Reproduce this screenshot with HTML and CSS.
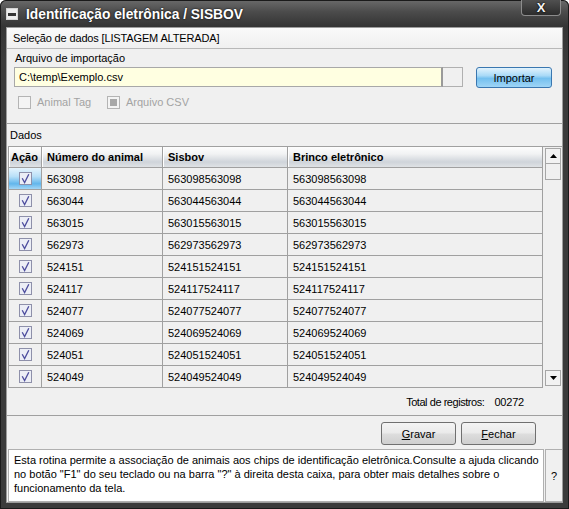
FILE: index.html
```html
<!DOCTYPE html>
<html lang="pt">
<head>
<meta charset="utf-8">
<title>Identificação eletrônica / SISBOV</title>
<link rel="stylesheet" href="styles.css">
</head>
<body>
<div class="window">
  <div class="titlebar">
    <span class="sysicon"><span class="bar"></span></span>
    <span class="title">Identificação eletrônica / SISBOV</span>
    <span class="close">X</span>
  </div>
  <div class="main">
    <section class="sel">
      <div class="sel-head">Seleção de dados [LISTAGEM ALTERADA]</div>
      <div class="sel-body">
        <div class="lbl">Arquivo de importação</div>
        <div class="file-row">
          <div class="file-input">C:\temp\Exemplo.csv</div>
          <div class="file-btn"></div>
          <button class="btn-import">Importar</button>
        </div>
        <div class="checks">
          <div class="chk-item first"><span class="chk"></span><span class="chk-lbl">Animal Tag</span></div>
          <div class="chk-item"><span class="chk on"><span class="dot"></span></span><span class="chk-lbl">Arquivo CSV</span></div>
        </div>
      </div>
    </section>
    <div class="dados-title">Dados</div>
    <div class="grid-wrap">
      <div class="grid">
        <div class="hc c1">Ação</div><div class="hc">Número do animal</div><div class="hc">Sisbov</div><div class="hc">Brinco eletrônico</div>

        <div class="cell c1 sel-cell"><svg class="cb" width="13" height="13" viewBox="0 0 13 13"><rect x="0.5" y="0.5" width="12" height="12" fill="#eceef6" stroke="#8e90aa"/><path d="M3.2 6.2 L5.6 10.6 L9.8 2.2" fill="none" stroke="#4d4d9e" stroke-width="1.3"/></svg></div><div class="cell">563098</div><div class="cell">563098563098</div><div class="cell">563098563098</div>

        <div class="cell c1"><svg class="cb" width="13" height="13" viewBox="0 0 13 13"><rect x="0.5" y="0.5" width="12" height="12" fill="#eceef6" stroke="#8e90aa"/><path d="M3.2 6.2 L5.6 10.6 L9.8 2.2" fill="none" stroke="#4d4d9e" stroke-width="1.3"/></svg></div><div class="cell">563044</div><div class="cell">563044563044</div><div class="cell">563044563044</div>

        <div class="cell c1"><svg class="cb" width="13" height="13" viewBox="0 0 13 13"><rect x="0.5" y="0.5" width="12" height="12" fill="#eceef6" stroke="#8e90aa"/><path d="M3.2 6.2 L5.6 10.6 L9.8 2.2" fill="none" stroke="#4d4d9e" stroke-width="1.3"/></svg></div><div class="cell">563015</div><div class="cell">563015563015</div><div class="cell">563015563015</div>

        <div class="cell c1"><svg class="cb" width="13" height="13" viewBox="0 0 13 13"><rect x="0.5" y="0.5" width="12" height="12" fill="#eceef6" stroke="#8e90aa"/><path d="M3.2 6.2 L5.6 10.6 L9.8 2.2" fill="none" stroke="#4d4d9e" stroke-width="1.3"/></svg></div><div class="cell">562973</div><div class="cell">562973562973</div><div class="cell">562973562973</div>

        <div class="cell c1"><svg class="cb" width="13" height="13" viewBox="0 0 13 13"><rect x="0.5" y="0.5" width="12" height="12" fill="#eceef6" stroke="#8e90aa"/><path d="M3.2 6.2 L5.6 10.6 L9.8 2.2" fill="none" stroke="#4d4d9e" stroke-width="1.3"/></svg></div><div class="cell">524151</div><div class="cell">524151524151</div><div class="cell">524151524151</div>

        <div class="cell c1"><svg class="cb" width="13" height="13" viewBox="0 0 13 13"><rect x="0.5" y="0.5" width="12" height="12" fill="#eceef6" stroke="#8e90aa"/><path d="M3.2 6.2 L5.6 10.6 L9.8 2.2" fill="none" stroke="#4d4d9e" stroke-width="1.3"/></svg></div><div class="cell">524117</div><div class="cell">524117524117</div><div class="cell">524117524117</div>

        <div class="cell c1"><svg class="cb" width="13" height="13" viewBox="0 0 13 13"><rect x="0.5" y="0.5" width="12" height="12" fill="#eceef6" stroke="#8e90aa"/><path d="M3.2 6.2 L5.6 10.6 L9.8 2.2" fill="none" stroke="#4d4d9e" stroke-width="1.3"/></svg></div><div class="cell">524077</div><div class="cell">524077524077</div><div class="cell">524077524077</div>

        <div class="cell c1"><svg class="cb" width="13" height="13" viewBox="0 0 13 13"><rect x="0.5" y="0.5" width="12" height="12" fill="#eceef6" stroke="#8e90aa"/><path d="M3.2 6.2 L5.6 10.6 L9.8 2.2" fill="none" stroke="#4d4d9e" stroke-width="1.3"/></svg></div><div class="cell">524069</div><div class="cell">524069524069</div><div class="cell">524069524069</div>

        <div class="cell c1"><svg class="cb" width="13" height="13" viewBox="0 0 13 13"><rect x="0.5" y="0.5" width="12" height="12" fill="#eceef6" stroke="#8e90aa"/><path d="M3.2 6.2 L5.6 10.6 L9.8 2.2" fill="none" stroke="#4d4d9e" stroke-width="1.3"/></svg></div><div class="cell">524051</div><div class="cell">524051524051</div><div class="cell">524051524051</div>

        <div class="cell c1"><svg class="cb" width="13" height="13" viewBox="0 0 13 13"><rect x="0.5" y="0.5" width="12" height="12" fill="#eceef6" stroke="#8e90aa"/><path d="M3.2 6.2 L5.6 10.6 L9.8 2.2" fill="none" stroke="#4d4d9e" stroke-width="1.3"/></svg></div><div class="cell">524049</div><div class="cell">524049524049</div><div class="cell">524049524049</div>
      </div>
      <div class="vscroll">
        <div class="sbtn"><svg width="7" height="4" viewBox="0 0 7 4"><path d="M0 4 L3.5 0 L7 4 Z" fill="#000"/></svg></div>
        <div class="thumb"></div>
        <div class="track"></div>
        <div class="sbtn"><svg width="7" height="4" viewBox="0 0 7 4"><path d="M0 0 L7 0 L3.5 4 Z" fill="#000"/></svg></div>
      </div>
    </div>
    <div class="total"><span>Total de registros:</span><span class="count">00272</span></div>
    <div class="actions">
      <button class="btn"><u>G</u>ravar</button>
      <button class="btn"><u>F</u>echar</button>
    </div>
    <div class="help">
      <div class="help-text">Esta rotina permite a associação de animais aos chips de identificação eletrônica.Consulte a ajuda clicando no botão "F1" do seu teclado ou na barra "?" à direita desta caixa, para obter mais detalhes sobre o funcionamento da tela.</div>
      <div class="help-q">?</div>
    </div>
  </div>
</div>
</body>
</html>
```
FILE: styles.css
```css
html, body {
  margin: 0;
  padding: 0;
  background: #ffffff;
}
body {
  font-family: "Liberation Sans", Arial, sans-serif;
  font-size: 11px;
  color: #000;
}
.window {
  width: 569px;
  height: 509px;
  box-sizing: border-box;
  display: flex;
  flex-direction: column;
  border-radius: 6px 6px 0 0;
  background: linear-gradient(to bottom, #6a6a6a 0px, #4b4b4b 12px, #353535 26px, #3b3b3b 60px, #3b3b3b 100%);
  box-shadow: inset 0 0 0 1px #1a1a1a;
}
.titlebar {
  height: 27px;
  display: flex;
  align-items: center;
  padding-left: 6px;
  flex: none;
}
.sysicon {
  width: 12px;
  height: 12px;
  box-sizing: border-box;
  border: 1px solid #d4d4d4;
  background: #ececec;
  display: flex;
  align-items: center;
  justify-content: center;
  margin-top: 1px;
}
.sysicon .bar {
  width: 8px;
  height: 3px;
  background: #333;
}
.title {
  margin-left: 8px;
  color: #ffffff;
  font-weight: bold;
  font-size: 13.8px;
  text-shadow: 0 0 2px #000;
  margin-top: 1px;
}
.close {
  margin-left: auto;
  margin-right: 8px;
  align-self: flex-start;
  width: 40px;
  height: 16px;
  box-sizing: border-box;
  border: 1px solid #8c8c8c;
  border-top: none;
  border-radius: 0 0 4px 4px;
  background: linear-gradient(to bottom, #505050, #2c2c2c);
  color: #f4f4f4;
  font-weight: bold;
  font-size: 13px;
  line-height: 15px;
  text-align: center;
  text-shadow: 0 0 1px #000, 0 0 2px #000;
}
.main {
  flex: 1;
  margin: 0 6px 6px 6px;
  border: 1px solid #9c9c9c;
  background: #f0f0f0;
  display: flex;
  flex-direction: column;
  min-height: 0;
}
.sel-head {
  height: 20px;
  line-height: 20px;
  padding-left: 6px;
  border-bottom: 1px solid #b8b8b8;
  background: linear-gradient(to bottom, #fafafa, #f0f0f0);
  letter-spacing: -0.15px;
}
.sel-body {
  height: 74px;
  border-bottom: 1px solid #a0a0a0;
  box-sizing: content-box;
}
.lbl {
  padding-top: 2px;
  line-height: 14px;
  padding-left: 8px;
}
.file-row {
  margin-top: 2px;
  height: 21px;
  display: flex;
  padding-left: 7px;
}
.file-input {
  width: 429px;
  height: 20px;
  box-sizing: border-box;
  border: 1px solid #a8a8a8;
  border-right: 2px solid #9a9a9a;
  background: #ffffe1;
  line-height: 18px;
  padding-left: 4px;
}
.file-btn {
  width: 20px;
  height: 20px;
  box-sizing: border-box;
  border: 1px solid #b0b0b0;
  border-left: none;
  background: #f0f0f0;
}
.btn-import {
  margin-left: 13px;
  width: 76px;
  height: 21px;
  box-sizing: border-box;
  border: 1px solid #3a77b0;
  border-radius: 3px;
  background: linear-gradient(to bottom, #e2f3fd 0%, #a9daf7 40%, #74c0ef 55%, #9fd5f6 100%);
  font-family: "Liberation Sans", Arial, sans-serif;
  font-size: 11px;
  color: #000;
  padding: 0;
}
.checks {
  margin-top: 6px;
  height: 16px;
  display: flex;
  align-items: center;
  padding-left: 11px;
}
.chk-item {
  display: flex;
  align-items: center;
}
.chk-item.first {
  width: 89px;
}
.chk {
  width: 13px;
  height: 13px;
  box-sizing: border-box;
  border: 1px solid #b4b4b4;
  background: #f4f4f4;
  display: flex;
  align-items: center;
  justify-content: center;
}
.chk .dot {
  width: 7px;
  height: 7px;
  background: #a8a8a8;
}
.chk-lbl {
  margin-left: 6px;
  color: #a3a3a3;
}
.dados-title {
  height: 22px;
  line-height: 22px;
  padding-left: 3px;
}
.grid-wrap {
  display: flex;
  height: 242px;
  flex: none;
}
.grid {
  margin-left: 1px;
  border-top: 1px solid #a0a0a0;
  border-left: 1px solid #a0a0a0;
  display: grid;
  grid-template-columns: 33px 121px 125px 255px;
  grid-auto-rows: 22px;
  grid-template-rows: 21px;
  align-content: start;
}
.hc, .cell {
  box-sizing: border-box;
  border-right: 1px solid #a0a0a0;
  border-bottom: 1px solid #a0a0a0;
  padding-left: 5px;
  display: flex;
  align-items: center;
  white-space: nowrap;
}
.hc {
  font-weight: bold;
  background: linear-gradient(to bottom, #fdfdfd 0%, #f1f2f3 35%, #cfd4da 75%, #dfe2e5 100%);
  box-shadow: inset 1px 0 0 #ffffff;
}
.hc.c1 {
  padding-left: 2px;
}
.cell.c1 {
  padding-left: 0;
  justify-content: center;
}
.sel-cell {
  background: linear-gradient(to bottom, #e6f4fd 0%, #b9e0f8 40%, #62b6ec 75%, #a4d6f6 100%);
}
.cb {
  display: block;
}
.vscroll {
  width: 19px;
  box-sizing: border-box;
  padding: 1px 1px 2px 2px;
  border-top: 1px solid #a0a0a0;
  display: flex;
  flex-direction: column;
}
.sbtn {
  width: 16px;
  height: 16px;
  box-sizing: border-box;
  border: 1px solid #a6a6a6;
  background: #f2f2f2;
  display: flex;
  align-items: center;
  justify-content: center;
}
.thumb {
  width: 16px;
  height: 16px;
  box-sizing: border-box;
  border: 1px solid #a6a6a6;
  border-top: none;
  background: #f0f0f0;
}
.track {
  flex: 1;
}
.total {
  height: 27px;
  border-bottom: 1px solid #a0a0a0;
  display: flex;
  align-items: center;
  justify-content: flex-end;
  padding-right: 38px;
  letter-spacing: -0.45px;
}
.total .count {
  margin-left: 10px;
  letter-spacing: -0.2px;
}
.actions {
  height: 32px;
  box-sizing: border-box;
  padding-top: 6px;
  padding-right: 26px;
  display: flex;
  justify-content: flex-end;
  gap: 5px;
}
.btn {
  width: 75px;
  height: 23px;
  box-sizing: border-box;
  border: 1px solid #707070;
  border-radius: 3px;
  background: linear-gradient(to bottom, #f4f4f4 0%, #ebebeb 45%, #dcdcdc 55%, #cfcfcf 100%);
  font-family: "Liberation Sans", Arial, sans-serif;
  font-size: 11px;
  color: #000;
  padding: 0;
}
.help {
  flex: 1;
  display: flex;
  padding: 1px 0 0 1px;
}
.help-text {
  width: 536px;
  box-sizing: border-box;
  background: #ffffff;
  border: 1px solid #b0b0b0;
  padding: 3px 4px 0 5px;
  line-height: 14px;
}
.help-q {
  flex: 1;
  margin-left: 1px;
  border: 1px solid #b0b0b0;
  border-right: none;
  display: flex;
  align-items: center;
  justify-content: center;
}
```
